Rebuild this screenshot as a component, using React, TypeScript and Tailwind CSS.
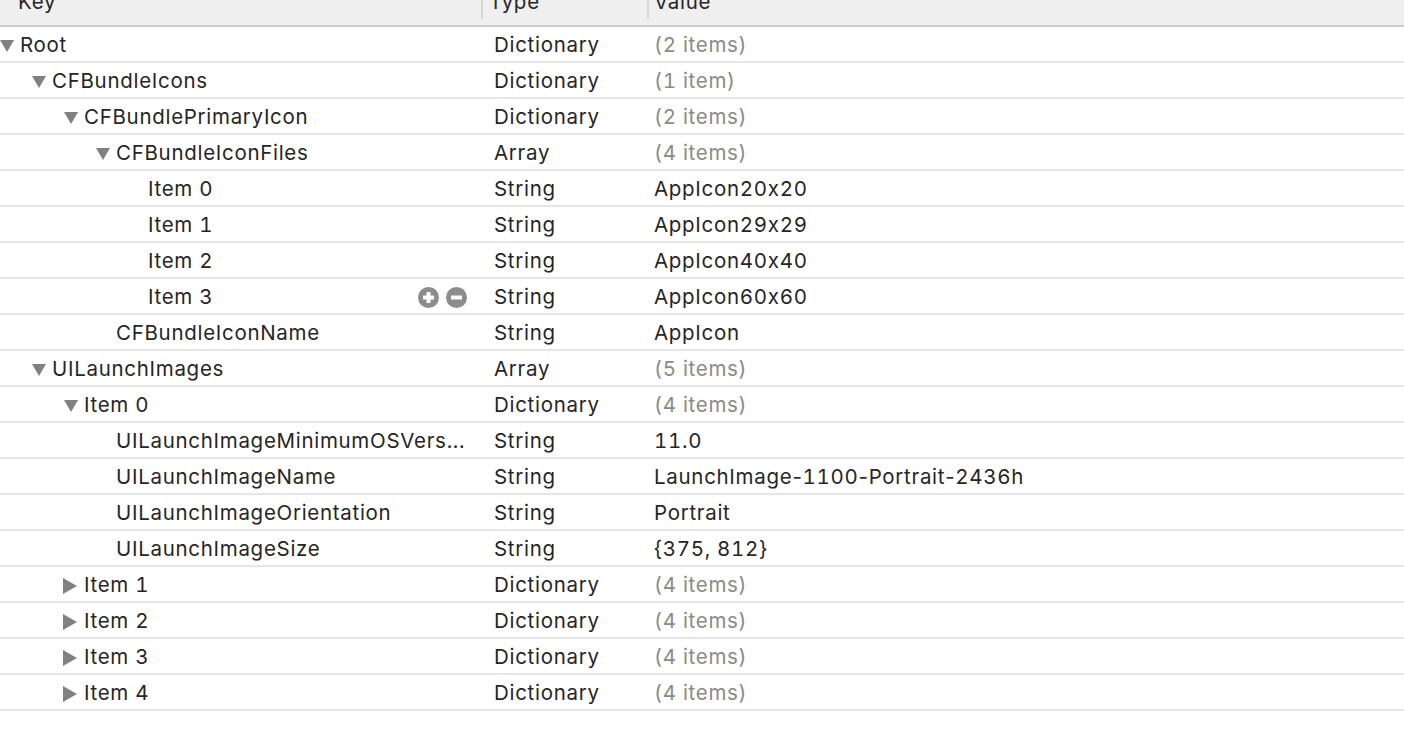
import React from "react";

type Row = {
  key: string;
  level: number;
  arrow?: "open" | "closed";
  type: string;
  value: string;
  muted?: boolean;
  controls?: boolean;
};

const rows: Row[] = [
  { key: "Root", level: 0, arrow: "open", type: "Dictionary", value: "(2 items)", muted: true },
  { key: "CFBundleIcons", level: 1, arrow: "open", type: "Dictionary", value: "(1 item)", muted: true },
  { key: "CFBundlePrimaryIcon", level: 2, arrow: "open", type: "Dictionary", value: "(2 items)", muted: true },
  { key: "CFBundleIconFiles", level: 3, arrow: "open", type: "Array", value: "(4 items)", muted: true },
  { key: "Item 0", level: 4, type: "String", value: "AppIcon20x20" },
  { key: "Item 1", level: 4, type: "String", value: "AppIcon29x29" },
  { key: "Item 2", level: 4, type: "String", value: "AppIcon40x40" },
  { key: "Item 3", level: 4, type: "String", value: "AppIcon60x60", controls: true },
  { key: "CFBundleIconName", level: 3, type: "String", value: "AppIcon" },
  { key: "UILaunchImages", level: 1, arrow: "open", type: "Array", value: "(5 items)", muted: true },
  { key: "Item 0", level: 2, arrow: "open", type: "Dictionary", value: "(4 items)", muted: true },
  { key: "UILaunchImageMinimumOSVers...", level: 3, type: "String", value: "11.0" },
  { key: "UILaunchImageName", level: 3, type: "String", value: "LaunchImage-1100-Portrait-2436h" },
  { key: "UILaunchImageOrientation", level: 3, type: "String", value: "Portrait" },
  { key: "UILaunchImageSize", level: 3, type: "String", value: "{375, 812}" },
  { key: "Item 1", level: 2, arrow: "closed", type: "Dictionary", value: "(4 items)", muted: true },
  { key: "Item 2", level: 2, arrow: "closed", type: "Dictionary", value: "(4 items)", muted: true },
  { key: "Item 3", level: 2, arrow: "closed", type: "Dictionary", value: "(4 items)", muted: true },
  { key: "Item 4", level: 2, arrow: "closed", type: "Dictionary", value: "(4 items)", muted: true },
];

// indent per level (text starts at 20 + 32 * level)
const indents = ["pl-[0px]", "pl-[32px]", "pl-[64px]", "pl-[96px]", "pl-[128px]"];

function Disclosure({ state }: { state?: "open" | "closed" }) {
  if (!state) return <span className="w-[20px] shrink-0" />;
  return (
    <span className="w-[20px] shrink-0 flex items-center">
      {state === "open" ? (
        <svg width="14" height="12" viewBox="0 0 14 12">
          <path d="M0 0 H14 L7 12 Z" fill="#808080" />
        </svg>
      ) : (
        <svg width="14" height="16" viewBox="0 0 14 16" className="-ml-[1px]">
          <path d="M0 0 L14 8 L0 16 Z" fill="#808080" />
        </svg>
      )}
    </span>
  );
}

function CircleButton({ minus }: { minus?: boolean }) {
  return (
    <svg width="21" height="21" viewBox="0 0 21 21">
      <circle cx="10.5" cy="10.5" r="10.5" fill="#8c8c8c" />
      <rect x="5" y="8.5" width="11" height="4" rx="0.5" fill="#fff" />
      {!minus && <rect x="8.5" y="5" width="4" height="11" rx="0.5" fill="#fff" />}
    </svg>
  );
}

// tabular digits widen the hyphen too, so hyphens get plain spacing
function Value({ text }: { text: string }) {
  const parts = text.split("-");
  return (
    <>
      {parts.map((p, i) => (
        <React.Fragment key={i}>
          {i > 0 && <span style={{ fontFeatureSettings: "'calt' 0, 'tnum' 0" }}>-</span>}
          {p}
        </React.Fragment>
      ))}
    </>
  );
}

export default function App() {
  return (
    <div
      className="w-[1404px] h-[748px] bg-white overflow-hidden text-[20.5px] tracking-[0.7px] text-[#262626]"
      style={{ fontFamily: "Inter, 'Noto Sans', sans-serif", fontFeatureSettings: "'calt' 0, 'tnum' 1" }}
    >
      {/* column header, scrolled so its labels are half hidden */}
      <div className="h-[27px] bg-[#efefef] border-b-2 border-[#cdcdcd] flex overflow-hidden">
        <div className="w-[481px] shrink-0 pl-[18px] -mt-[11px] leading-[26px]">Key</div>
        <div className="w-[166px] shrink-0 border-l-2 border-[#d6d6d6] h-[19px] pl-[6px]">
          <div className="-mt-[11px] leading-[26px]">Type</div>
        </div>
        <div className="flex-1 border-l-2 border-[#d6d6d6] h-[19px] pl-[5px]">
          <div className="-mt-[11px] leading-[26px]">Value</div>
        </div>
      </div>

      {rows.map((r, i) => (
        <div key={i} className="h-[36px] border-b-2 border-[#e6e6e6] flex items-center pt-[3px]">
          <div className={`w-[481px] shrink-0 flex items-center pr-[14px] ${indents[r.level]}`}>
            <Disclosure state={r.arrow} />
            <span className="whitespace-nowrap flex-1 min-w-0">{r.key}</span>
            {r.controls && (
              <span className="flex gap-[7px] ml-auto">
                <CircleButton />
                <CircleButton minus />
              </span>
            )}
          </div>
          <div className="w-[173px] shrink-0 pl-[13px]">{r.type}</div>
          <div className={`flex-1 ${r.muted ? "text-[#8a8a8a]" : ""}`}>
            <Value text={r.value} />
          </div>
        </div>
      ))}
    </div>
  );
}
